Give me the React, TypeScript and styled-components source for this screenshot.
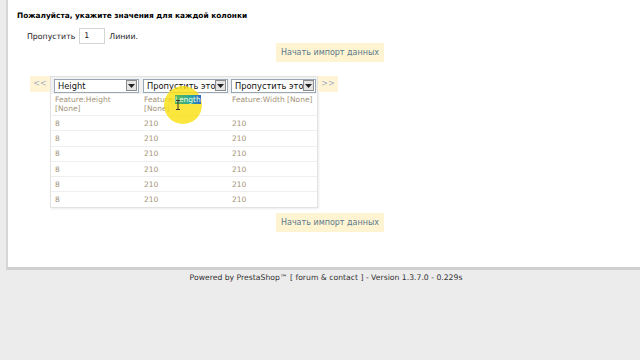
import React from "react";
import styled, { createGlobalStyle } from "styled-components";

const Global = createGlobalStyle`
  html, body { margin: 0; padding: 0; background: #ececec; }
  body { font-family: "DejaVu Sans", Verdana, sans-serif; color: #222; }
`;

const Page = styled.div`
  width: 640px;
  height: 360px;
  overflow: hidden;
  position: relative;
`;

const Panel = styled.div`
  margin-left: 6px;
  height: 270px;
  box-sizing: border-box;
  background: #fff;
  border-left: 2px solid #d6d6d6;
  border-bottom: 3px solid #cfcfcf;
  padding: 10px 0 0 9px;
`;

const Title = styled.div`
  font-weight: bold;
  font-size: 7.4px;
  line-height: 12px;
  color: #000;
`;

const SkipRow = styled.div`
  display: flex;
  align-items: center;
  gap: 4px;
  margin: 6px 0 0 10px;
  font-size: 7.8px;
  color: #222;
`;

const NumInput = styled.div`
  width: 26px;
  height: 16px;
  box-sizing: border-box;
  border: 1px solid #d4d4d4;
  font-size: 7.8px;
  line-height: 14px;
  padding-left: 4px;
`;

const ButtonRow = styled.div<{ $top: number }>`
  display: flex;
  margin-top: ${(p) => p.$top}px;
  padding-left: 259px;
`;

const ImportButton = styled.div`
  background: #fff4d2;
  color: #5b7a8c;
  font-size: 8px;
  height: 19px;
  line-height: 19px;
  width: 108px;
  white-space: nowrap;
  text-align: center;
`;

const TableRow = styled.div`
  display: flex;
  align-items: flex-start;
  margin: 14px 0 0 13px;
`;

const ArrowBtn = styled.div`
  width: 20px;
  height: 16px;
  background: #fff5d6;
  color: #9fb0c0;
  font-size: 8px;
  line-height: 16px;
  text-align: center;
`;

const Table = styled.div`
  width: 266px;
  border: 1px solid #e2e2e2;
  box-shadow: 1px 1px 2px #ececec;
  background: #fff;
`;

const Grid = styled.div`
  display: grid;
  grid-template-columns: 89px 88px 89px;
`;

const HeadBand = styled(Grid)`
  background: #f1f1f1;
  height: 17px;
  align-items: center;
`;

const SelectBox = styled.div`
  margin-left: 3px;
  width: 85px;
  height: 14px;
  box-sizing: border-box;
  border: 1px solid #9aa8b6;
  background: #fff;
  display: flex;
  align-items: center;
`;

const SelectText = styled.div`
  flex: 1;
  min-width: 0;
  font-size: 8.3px;
  line-height: 12px;
  padding-left: 3px;
  overflow: hidden;
  white-space: nowrap;
  color: #111;
`;

const SelectArrow = styled.div`
  flex: none;
  width: 11px;
  height: 11px;
  margin-right: 1px;
  box-sizing: border-box;
  border: 1px solid #8c8c8c;
  background: #e4e4e4;
  display: flex;
  align-items: center;
  justify-content: center;
`;

const Cell = styled.div`
  padding-left: 4px;
  font-size: 7.5px;
  color: #a39478;
  line-height: 9px;
  white-space: nowrap;
`;

const FeatureRow = styled(Grid)`
  height: 20px;
  padding-top: 1px;
`;

const DataRow = styled(Grid)`
  height: 15.3px;
  border-top: 1px solid #efefef;
  align-items: center;
  box-sizing: border-box;
`;

const Sel = styled.span`
  position: relative;
  z-index: 2;
  background: linear-gradient(90deg, #62b84e 0%, #2aa6a0 60%, #3268c8 100%);
  color: #e8ffe0;
`;

const Footer = styled.div`
  text-align: center;
  font-size: 7.7px;
  color: #333;
  padding: 3px 0 0 12px;
`;

const Spot = styled.div`
  position: absolute;
  z-index: 1;
  left: 164px;
  top: 86px;
  width: 38px;
  height: 38px;
  border-radius: 50%;
  background: rgba(250, 225, 20, 0.82);
  pointer-events: none;
`;

const Cursor = styled.svg`
  position: absolute;
  z-index: 3;
  left: 175px;
  top: 100px;
`;

const Select = ({ label }: { label: string }) => (
  <SelectBox>
    <SelectText>{label}</SelectText>
    <SelectArrow>
      <svg width="7" height="4" viewBox="0 0 7 4">
        <path d="M0 0h7L3.5 4z" fill="#222" />
      </svg>
    </SelectArrow>
  </SelectBox>
);

const rows = [0, 1, 2, 3, 4, 5];

export default function App() {
  return (
    <Page>
      <Global />
      <Panel>
        <Title>Пожалуйста, укажите значения для каждой колонки</Title>
        <SkipRow>
          Пропустить <NumInput>1</NumInput> Линии.
        </SkipRow>
        <ButtonRow $top={-1}>
          <ImportButton>Начать импорт данных</ImportButton>
        </ButtonRow>
        <TableRow>
          <ArrowBtn>&lt;&lt;</ArrowBtn>
          <Table>
            <HeadBand>
              <Select label="Height" />
              <Select label="Пропустить этот столбец" />
              <Select label="Пропустить этот столбец" />
            </HeadBand>
            <FeatureRow>
              <Cell>
                Feature:Height
                <br />
                [None]
              </Cell>
              <Cell>
                Feature:<Sel>Length</Sel>
                <br />
                [None]
              </Cell>
              <Cell>Feature:Width [None]</Cell>
            </FeatureRow>
            {rows.map((r) => (
              <DataRow key={r}>
                <Cell>8</Cell>
                <Cell>210</Cell>
                <Cell>210</Cell>
              </DataRow>
            ))}
          </Table>
          <ArrowBtn>&gt;&gt;</ArrowBtn>
        </TableRow>
        <ButtonRow $top={5}>
          <ImportButton>Начать импорт данных</ImportButton>
        </ButtonRow>
      </Panel>
      <Footer>Powered by PrestaShop™ [ forum &amp; contact ] - Version 1.3.7.0 - 0.229s</Footer>
      <Spot />
      <Cursor width="6" height="10" viewBox="0 0 6 10">
        <path d="M1 0.5h4M3 0.5v9M1 9.5h4" stroke="#333" strokeWidth="1" fill="none" />
      </Cursor>
    </Page>
  );
}
